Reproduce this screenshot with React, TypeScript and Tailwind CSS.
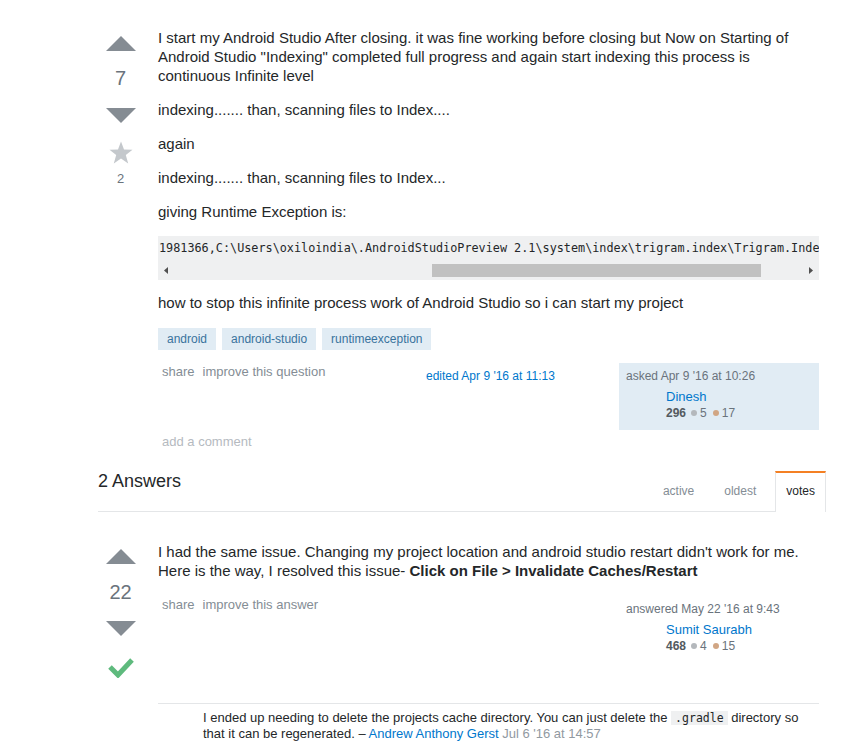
import React from 'react';

// vote arrow triangles
function UpArrow() {
  return (
    <svg width="30" height="16" viewBox="0 0 30 16" className="block">
      <polygon points="0,16 15,1 30,16" fill="#858c93" />
    </svg>
  );
}

function DownArrow() {
  return (
    <svg width="30" height="16" viewBox="0 0 30 16" className="block">
      <polygon points="0,0 30,0 15,15" fill="#858c93" />
    </svg>
  );
}

function Star() {
  return (
    <svg width="24" height="23" viewBox="0 0 24 23" className="block">
      <polygon
        points="12,0.5 15,8.6 23.5,8.8 16.8,14 19.2,22.5 12,17.5 4.8,22.5 7.2,14 0.5,8.8 9,8.6"
        fill="#c4c8cc"
      />
    </svg>
  );
}

function Check() {
  return (
    <svg width="26" height="21" viewBox="0 0 26 21" className="block">
      <polyline points="2,10 10,18 24,3" fill="none" stroke="#5eba7d" strokeWidth="5" />
    </svg>
  );
}

function Rep({ rep, silver, bronze }: { rep: string; silver: string; bronze: string }) {
  return (
    <div className="flex items-center text-[12px] leading-[16px] text-[#6a737c]">
      <span className="font-bold text-[#535a60]">{rep}</span>
      <span className="ml-[5px] mr-[3px] inline-block h-[6px] w-[6px] rounded-full bg-[#b4b8bc]" />
      <span>{silver}</span>
      <span className="ml-[6px] mr-[3px] inline-block h-[6px] w-[6px] rounded-full bg-[#d1a684]" />
      <span>{bronze}</span>
    </div>
  );
}

function Owner({ label, name, rep, silver, bronze, shaded }: {
  label: string; name: string; rep: string; silver: string; bronze: string; shaded?: boolean;
}) {
  return (
    <div className={`w-[200px] px-[7px] pt-[5px] pb-[9px] ${shaded ? 'bg-[#e1ecf4]' : ''}`}>
      <div className="text-[12px] leading-[16px] text-[#6a737c]">{label}</div>
      <div className="mt-[4px] flex">
        <div className="w-[40px] shrink-0" />
        <div>
          <div className="text-[13px] leading-[17px] text-[#0077cc]">{name}</div>
          <Rep rep={rep} silver={silver} bronze={bronze} />
        </div>
      </div>
    </div>
  );
}

function PostMenu({ what }: { what: string }) {
  return (
    <div className="flex w-[268px] text-[13px] leading-[17px] text-[#848d95]">
      <span className="px-[4px]">share</span>
      <span className="px-[4px]">improve this {what}</span>
    </div>
  );
}

export default function App() {
  const p = 'mb-[15px]';
  return (
    <div className="min-h-[745px] w-full bg-white font-['Liberation_Sans',Arial,sans-serif] text-[#242729]">
      <div className="ml-[98px] w-[728px] pt-[28px]">
        {/* question */}
        <div className="flex">
          <div className="flex w-[45px] flex-col items-center pt-[7px] text-[#6a737c]">
            <UpArrow />
            <div className="mt-[15px] mb-[18px] text-[20px] leading-[24px]">7</div>
            <DownArrow />
            <div className="mt-[17px]">
              <Star />
            </div>
            <div className="mt-[7px] text-[13px] leading-[16px]">2</div>
          </div>

          <div className="ml-[15px] w-[661px] text-[15px] leading-[19px]">
            <p className={p}>
              I start my Android Studio After closing. it was fine working before closing but Now on Starting of
              Android Studio "Indexing" completed full progress and again start indexing this process is
              continuous Infinite level
            </p>
            <p className={p}>indexing....... than, scanning files to Index....</p>
            <p className={p}>again</p>
            <p className={p}>indexing....... than, scanning files to Index...</p>
            <p className={p}>giving Runtime Exception is:</p>

            <div className="bg-[#eff0f1] pt-[4px] pb-[2px]">
              <div className="overflow-hidden whitespace-nowrap pl-[1px] font-['DejaVu_Sans_Mono',monospace] text-[11.8px] leading-[16px] text-[#242729]">
                1981366,C:\Users\oxiloindia\.AndroidStudioPreview 2.1\system\index\trigram.index\Trigram.Inde
              </div>
              <div className="mt-[6px] flex h-[16px] items-center">
                <div className="flex w-[16px] justify-center">
                  <svg width="4" height="7" viewBox="0 0 4 7"><polygon points="4,0 4,7 0,3.5" fill="#505050" /></svg>
                </div>
                <div className="flex flex-1 items-center">
                  <div className="ml-[258px] h-[13px] w-[329px] bg-[#c1c1c1]" />
                </div>
                <div className="flex w-[16px] justify-center">
                  <svg width="4" height="7" viewBox="0 0 4 7"><polygon points="0,0 0,7 4,3.5" fill="#505050" /></svg>
                </div>
              </div>
            </div>

            <p className="mt-[13px]">how to stop this infinite process work of Android Studio so i can start my project</p>

            <div className="mt-[16px] flex gap-[6px]">
              {['android', 'android-studio', 'runtimeexception'].map((t) => (
                <span key={t} className="flex h-[22px] items-center bg-[#e1ecf4] px-[9px] text-[12px] text-[#39739d]">
                  {t}
                </span>
              ))}
            </div>

            <div className="mt-[13px] flex">
              <PostMenu what="question" />
              <div className="flex-1 pt-[5px] text-[12px] leading-[16px] text-[#0077cc]">edited Apr 9 '16 at 11:13</div>
              <Owner label="asked Apr 9 '16 at 10:26" name="Dinesh" rep="296" silver="5" bronze="17" shaded />
            </div>

            <div className="mt-[3px] pl-[4px] text-[13px] leading-[17px] text-[#b5babf]">add a comment</div>
          </div>
        </div>

        {/* answers header */}
        <div className="mt-[20px] flex items-start justify-between border-b border-[#e4e6e8]">
          <h2 className="text-[18px] leading-[22px] text-[#242729]">2 Answers</h2>
          <div className="mt-[1px] -mb-px flex gap-[8px] text-[12px] leading-[16px]">
            <span className="border-x border-t-2 border-transparent px-[10px] pt-[10px] pb-[12px] text-[#848d95]">active</span>
            <span className="border-x border-t-2 border-transparent px-[10px] pt-[10px] pb-[12px] text-[#848d95]">oldest</span>
            <span className="border-x border-x-[#e4e6e8] border-t-2 border-t-[#f48024] bg-white px-[10px] pt-[10px] pb-[13px] text-[#242729]">votes</span>
          </div>
        </div>

        {/* answer */}
        <div className="flex pt-[30px]">
          <div className="flex w-[45px] flex-col items-center pt-[6px] text-[#6a737c]">
            <UpArrow />
            <div className="mt-[16px] mb-[17px] text-[20px] leading-[24px]">22</div>
            <DownArrow />
            <div className="mt-[20px]">
              <Check />
            </div>
          </div>

          <div className="ml-[15px] w-[661px]">
            <p className="text-[15px] leading-[19px]">
              I had the same issue. Changing my project location and android studio restart didn't work for me.
              Here is the way, I resolved this issue- <b className="font-bold">Click on File &gt; Invalidate Caches/Restart</b>
            </p>
            <div className="mt-[16px] flex">
              <PostMenu what="answer" />
              <div className="flex-1" />
              <Owner label="answered May 22 '16 at 9:43" name="Sumit Saurabh" rep="468" silver="4" bronze="15" />
            </div>
          </div>
        </div>

        {/* comments */}
        <div className="mt-[25px] ml-[60px] w-[661px] border-t border-[#e4e6e8] pt-[6px] pl-[45px] pr-[10px] text-[13px] leading-[16px]">
          I ended up needing to delete the projects cache directory. You can just delete the{' '}
          <code className="bg-[#eff0f1] px-[4px] font-['DejaVu_Sans_Mono',monospace] text-[11.5px] leading-[14px]">.gradle</code> directory so
          that it can be regenerated. – <span className="text-[#0077cc]">Andrew Anthony Gerst</span>{' '}
          <span className="text-[#9199a1]">Jul 6 '16 at 14:57</span>
        </div>
      </div>
    </div>
  );
}
